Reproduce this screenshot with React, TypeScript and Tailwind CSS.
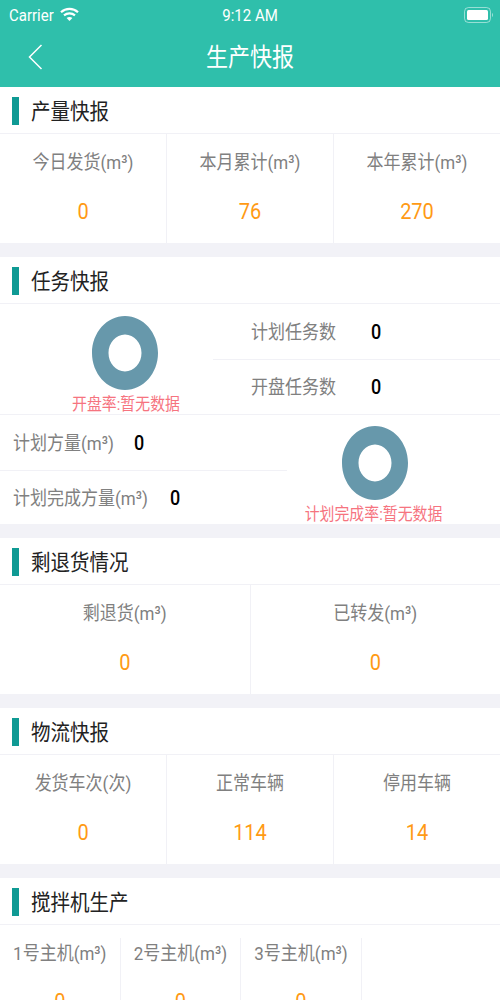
import React from "react";

function Title({ text }: { text: string }) {
  return (
    <div className="flex h-[47px] items-center border-b border-[#f1f1f6] bg-white pt-[2px]">
      <div className="ml-3 h-7 w-[7px] bg-[#0f9a94]" />
      <div className="ml-3 mt-[1px] scale-y-[1.125] text-[19.5px] leading-none text-[#222222]">{text}</div>
    </div>
  );
}

function Stat({ label, value, last }: { label: string; value: string; last?: boolean }) {
  return (
    <div className={`flex h-[109px] flex-1 flex-col items-center ${last ? "" : "border-r border-[#f1f1f6]"}`}>
      <div className="mt-[16px] scale-y-[1.125] text-[17px] leading-[24px] text-[#808080]">{label}</div>
      <div className="mt-[23px] scale-y-[1.125] text-[20px] leading-[28px] text-[#ff9a14]">{value}</div>
    </div>
  );
}

function Gap() {
  return <div className="h-[14px] bg-[#f2f2f7]" />;
}

function Donut() {
  return (
    <svg width="66" height="74" viewBox="0 0 66 74" className="block">
      <path
        fillRule="evenodd"
        fill="#6798ab"
        d="M33 0C51.2 0 66 16.6 66 37S51.2 74 33 74 0 57.4 0 37 14.8 0 33 0ZM33 18.5C23.9 18.5 16.5 26.8 16.5 37S23.900 55.500 33 55.500 49.500 47.200 49.500 37 42.100 18.500 33 18.500Z"
      />
    </svg>
  );
}

function Info({ label, children, pad, gap, h }: { label: string; children: string; pad: string; gap: string; h: string }) {
  return (
    <div className={`flex items-center ${h} ${pad}`}>
      <span className="scale-y-[1.125] text-[17px] leading-[24px] text-[#808080]">{label}</span>
      <span className={`scale-y-[1.125] text-[18px] font-medium leading-[24px] text-black ${gap}`}>{children}</span>
    </div>
  );
}

export default function App() {
  return (
    <div
      className="h-[1000px] overflow-hidden bg-white"
      style={{ fontFamily: 'Roboto, "Noto Sans CJK SC", sans-serif' }}
    >
      <header className="h-[87px] bg-[#2fbfab] text-white">
        <div className="relative flex h-[30px] items-center justify-between pl-[9px] pr-[7px]">
          <div className="flex items-center gap-[6px]">
            <span className="scale-y-[1.125] text-[15px] leading-none">Carrier</span>
            <svg width="19" height="14" viewBox="0 0 19 14" fill="none" stroke="white" strokeWidth="2.2" className="mb-[2px]">
              <path d="M1 5.200C5.800.700 13.200.700 18 5.200" />
              <path d="M4 8.400c3.200-2.700 7.800-2.700 11 0" />
              <path d="M9.500 14 6.600 11c1.700-1.300 4.100-1.300 5.800 0Z" fill="white" stroke="none" />
            </svg>
          </div>
          <span className="absolute left-0 right-0 scale-y-[1.125] text-center text-[15px] leading-none">9:12 AM</span>
          <svg width="29" height="16" viewBox="0 0 29 16" fill="none">
            <rect x="0.5" y="0.5" width="26" height="15" rx="4" stroke="white" strokeOpacity="0.5" />
            <rect x="3" y="3" width="21" height="10" rx="1.5" fill="white" />
            <path d="M28 6v4c.6-.3 1-1 1-2s-.4-1.700-1-2Z" fill="white" fillOpacity="0.5" />
          </svg>
        </div>
        <div className="relative flex h-[56px] items-center justify-center">
          <svg width="16" height="26" viewBox="0 0 16 26" fill="none" stroke="white" strokeWidth="1.5" className="absolute left-[28px] top-[14px]">
            <path d="M13.500 1 1.500 13 13.500 25" />
          </svg>
          <span className="scale-y-[1.125] text-[22px] leading-none">生产快报</span>
        </div>
      </header>

      <Title text="产量快报" />
      <div className="flex">
        <Stat label="今日发货(m³)" value="0" />
        <Stat label="本月累计(m³)" value="76" />
        <Stat label="本年累计(m³)" value="270" last />
      </div>
      <Gap />

      <Title text="任务快报" />
      <div className="flex h-[111px] border-b border-[#f1f1f6]">
        <div className="flex w-[250px] flex-col items-center pt-[12px]">
          <Donut />
          <div className="ml-[2px] mt-1 scale-y-[1.125] text-[14.9px] leading-[20px] text-[#f6747f]">开盘率:暂无数据</div>
        </div>
        <div className="ml-[-37px] flex flex-1 flex-col">
          <div className="border-b border-[#f1f1f6]">
            <Info h="h-[55px]" label="计划任务数" pad="pl-[38px]" gap="ml-[35px]">0</Info>
          </div>
          <Info h="h-[55px]" label="开盘任务数" pad="pl-[38px]" gap="ml-[35px]">0</Info>
        </div>
      </div>
      <div className="flex h-[109px]">
        <div className="w-[287px]">
          <div className="border-b border-[#f1f1f6]">
            <Info h="h-[55px]" label="计划方量(m³)" pad="pl-[13px]" gap="ml-[20px]">0</Info>
          </div>
          <Info h="h-[54px]" label="计划完成方量(m³)" pad="pl-[13px]" gap="ml-[22px]">0</Info>
        </div>
        <div className="ml-[-37px] flex w-[250px] flex-col items-center pt-[11px]">
          <Donut />
          <div className="mr-[3px] mt-1 scale-y-[1.125] text-[14.9px] leading-[20px] text-[#f6747f]">计划完成率:暂无数据</div>
        </div>
      </div>
      <Gap />

      <Title text="剩退货情况" />
      <div className="flex">
        <Stat label="剩退货(m³)" value="0" />
        <Stat label="已转发(m³)" value="0" last />
      </div>
      <Gap />

      <Title text="物流快报" />
      <div className="flex">
        <Stat label="发货车次(次)" value="0" />
        <Stat label="正常车辆" value="114" />
        <Stat label="停用车辆" value="14" last />
      </div>
      <Gap />

      <Title text="搅拌机生产" />
      <div className="flex pt-[13px]">
        {["1号主机(m³)", "2号主机(m³)", "3号主机(m³)"].map((l) => (
          <div key={l} className="flex h-[109px] w-[120.6px] flex-col items-center border-r border-[#f1f1f6]">
            <div className="mt-[3px] scale-y-[1.125] text-[17px] leading-[24px] text-[#808080]">{l}</div>
            <div className="mt-[22px] scale-y-[1.125] text-[20px] leading-[28px] text-[#ff9a14]">0</div>
          </div>
        ))}
      </div>
    </div>
  );
}
